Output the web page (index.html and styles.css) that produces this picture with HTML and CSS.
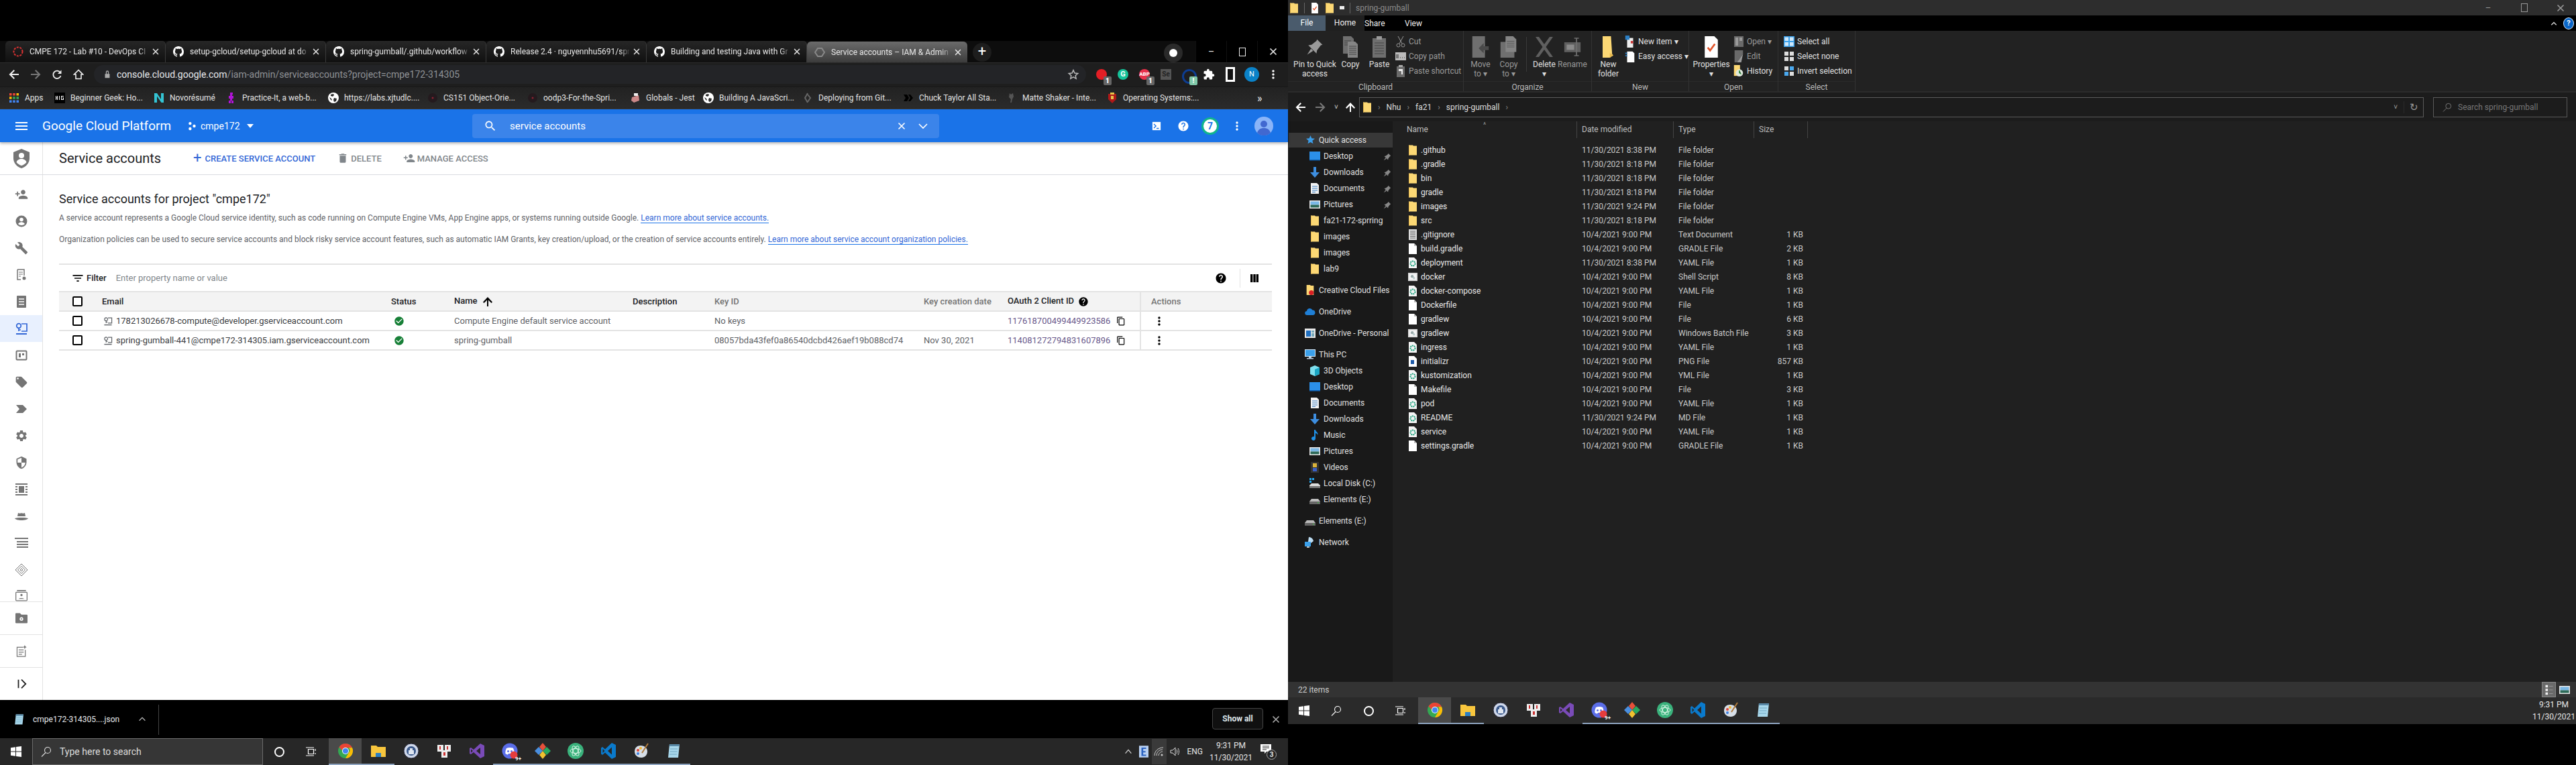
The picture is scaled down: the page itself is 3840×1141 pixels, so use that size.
FILE: index.html
```html
<!DOCTYPE html>
<html lang="en">
<head>
    <meta charset="UTF-8">
    <title>Service accounts</title>
    <link rel="stylesheet" href="styles.css">
</head>
<body>
<svg class="sprite" xmlns="http://www.w3.org/2000/svg">
    <symbol id="i-github" viewBox="0 0 16 16"><path fill="#fff" d="M8 0C3.58 0 0 3.58 0 8c0 3.54 2.29 6.53 5.47 7.59.4.07.55-.17.55-.38 0-.19-.01-.82-.01-1.49-2.01.37-2.53-.49-2.69-.94-.09-.23-.48-.94-.82-1.13-.28-.15-.68-.52-.01-.53.63-.01 1.08.58 1.23.82.72 1.21 1.87.87 2.33.66.07-.52.28-.87.51-1.07-1.78-.2-3.64-.89-3.64-3.95 0-.87.31-1.59.82-2.15-.08-.2-.36-1.02.08-2.12 0 0 .67-.21 2.2.82.64-.18 1.32-.27 2-.27.68 0 1.36.09 2 .27 1.53-1.04 2.2-.82 2.2-.82.44 1.1.16 1.92.08 2.12.51.56.82 1.27.82 2.15 0 3.07-1.87 3.75-3.65 3.95.29.25.54.73.54 1.48 0 1.07-.01 1.93-.01 2.2 0 .21.15.46.55.38A8.013 8.013 0 0016 8c0-4.42-3.58-8-8-8z"/></symbol>
    <symbol id="i-x" viewBox="0 0 16 16"><path fill="none" stroke="currentColor" stroke-width="1.6" d="M3.500 3.500l9 9m0-9l-9 9"/></symbol>
    <symbol id="i-search" viewBox="0 0 24 24"><path fill="currentColor" d="M15.5 14h-.79l-.28-.27C15.41 12.59 16 11.11 16 9.5 16 5.91 13.09 3 9.5 3S3 5.91 3 9.5 5.91 16 9.5 16c1.61 0 3.09-.59 4.23-1.57l.27.28v.79l5 4.99L20.49 19l-4.99-5zm-6 0C7.01 14 5 11.99 5 9.5S7.01 5 9.5 5 14 7.01 14 9.5 11.99 14 9.5 14z"/></symbol>
    <symbol id="i-help" viewBox="0 0 24 24"><path fill="currentColor" d="M12 2C6.48 2 2 6.48 2 12s4.48 10 10 10 10-4.48 10-10S17.52 2 12 2zm1 17h-2v-2h2v2zm2.07-7.75l-.9.92C13.45 12.9 13 13.5 13 15h-2v-.5c0-1.1.45-2.1 1.17-2.83l1.24-1.26c.37-.36.59-.86.59-1.41 0-1.1-.9-2-2-2s-2 .9-2 2H8c0-2.21 1.79-4 4-4s4 1.79 4 4c0 .88-.36 1.68-.93 2.25z"/></symbol>
    <symbol id="i-vert" viewBox="0 0 24 24"><path fill="currentColor" d="M12 8c1.1 0 2-.9 2-2s-.9-2-2-2-2 .9-2 2 .9 2 2 2zm0 2c-1.1 0-2 .9-2 2s.9 2 2 2 2-.9 2-2-.9-2-2-2zm0 6c-1.1 0-2 .9-2 2s.9 2 2 2 2-.9 2-2-.9-2-2-2z"/></symbol>
    <symbol id="i-check" viewBox="0 0 24 24"><path fill="#188038" d="M12 2C6.48 2 2 6.48 2 12s4.48 10 10 10 10-4.48 10-10S17.52 2 12 2zm-2 15l-5-5 1.41-1.41L10 14.17l7.59-7.59L19 8l-9 9z"/></symbol>
    <symbol id="i-copy" viewBox="0 0 24 24"><path fill="currentColor" d="M16 1H4c-1.1 0-2 .9-2 2v14h2V3h12V1zm3 4H8c-1.1 0-2 .9-2 2v14c0 1.1.9 2 2 2h11c1.1 0 2-.9 2-2V7c0-1.1-.9-2-2-2zm0 16H8V7h11v14z"/></symbol>
    <symbol id="i-trash" viewBox="0 0 24 24"><path fill="currentColor" d="M6 19c0 1.1.9 2 2 2h8c1.1 0 2-.9 2-2V7H6v12zM19 4h-3.5l-1-1h-5l-1 1H5v2h14V4z"/></symbol>
    <symbol id="i-personadd" viewBox="0 0 24 24"><path fill="currentColor" d="M15 12c2.21 0 4-1.79 4-4s-1.79-4-4-4-4 1.79-4 4 1.79 4 4 4zm-9-2V7H4v3H1v2h3v3h2v-3h3v-2H6zm9 4c-2.67 0-8 1.34-8 4v2h16v-2c0-2.66-5.33-4-8-4z"/></symbol>
    <symbol id="i-wrench" viewBox="0 0 24 24"><path fill="currentColor" d="M22.7 19l-9.1-9.1c.9-2.3.4-5-1.5-6.9-2-2-5-2.4-7.4-1.3L9 6 6 9 1.6 4.7C.4 7.1.9 10.1 2.9 12.1c1.9 1.9 4.6 2.4 6.9 1.5l9.1 9.1c.4.4 1 .4 1.4 0l2.3-2.3c.5-.4.5-1.1.1-1.4z"/></symbol>
    <symbol id="i-gear" viewBox="0 0 24 24"><path fill="currentColor" d="M19.14 12.94c.04-.3.06-.61.06-.94 0-.32-.02-.64-.07-.94l2.03-1.58c.18-.14.23-.41.12-.61l-1.92-3.32c-.12-.22-.37-.29-.59-.22l-2.39.96c-.5-.38-1.03-.7-1.62-.94l-.36-2.54c-.04-.24-.24-.41-.48-.41h-3.84c-.24 0-.43.17-.47.41l-.36 2.54c-.59.24-1.13.57-1.62.94l-2.39-.96c-.22-.08-.47 0-.59.22L2.74 8.87c-.12.21-.08.47.12.61l2.03 1.58c-.05.3-.09.63-.09.94s.02.64.07.94l-2.03 1.58c-.18.14-.23.41-.12.61l1.92 3.32c.12.22.37.29.59.22l2.39-.96c.5.38 1.03.7 1.62.94l.36 2.54c.05.24.24.41.48.41h3.84c.24 0 .44-.17.47-.41l.36-2.54c.59-.24 1.13-.56 1.62-.94l2.39.96c.22.08.47 0 .59-.22l1.92-3.32c.12-.22.07-.47-.12-.61l-2.01-1.58zM12 15.6c-1.98 0-3.6-1.62-3.6-3.6s1.62-3.6 3.6-3.6 3.6 1.62 3.6 3.6-1.62 3.6-3.6 3.6z"/></symbol>
    <symbol id="i-tag" viewBox="0 0 24 24"><path fill="currentColor" d="M21.41 11.58l-9-9C12.05 2.22 11.55 2 11 2H4c-1.1 0-2 .9-2 2v7c0 .55.22 1.05.59 1.42l9 9c.36.36.86.58 1.41.58.55 0 1.05-.22 1.41-.59l7-7c.37-.36.59-.86.59-1.41 0-.55-.23-1.06-.59-1.42zM5.5 7C4.67 7 4 6.33 4 5.5S4.67 4 5.5 4 7 4.67 7 5.5 6.33 7 5.5 7z"/></symbol>
    <symbol id="i-shield" viewBox="0 0 24 24"><path fill="currentColor" d="M12 1L3 5v6c0 5.55 3.84 10.74 9 12 5.16-1.26 9-6.45 9-12V5l-9-4zm0 11h7c-.53 4.12-3.28 7.79-7 8.94V12H5V6.3l7-3.11V12z"/></symbol>
    <symbol id="i-shieldperson" viewBox="0 0 24 29"><path fill="currentColor" d="M12 0L0 5v9c0 7 5 12.800 12 15 7-2.200 12-8 12-15V5z"/><circle cx="12" cy="10" r="4" fill="#fff"/><path fill="#fff" d="M4.500 20c1-3.500 4-5 7.500-5s6.500 1.500 7.500 5c-2 2.500-4.500 4-7.500 5-3-1-5.500-2.500-7.500-5z"/></symbol>
    <symbol id="i-acct" viewBox="0 0 20 20"><circle cx="10" cy="10" r="8.500" fill="currentColor"/><circle cx="10" cy="7.500" r="2.800" fill="#fff"/><path fill="#fff" d="M5 14c1-2 3-2.800 5-2.800s4 .8 5 2.800c-1.300 1.300-3 2-5 2s-3.700-.7-5-2z"/></symbol>
    <symbol id="i-docgear" viewBox="0 0 20 20"><path fill="none" stroke="currentColor" stroke-width="1.500" d="M4 2h10v9M9 17H4V2"/><path stroke="currentColor" d="M6 6h6M6 9h6M6 12h3"/><circle cx="14" cy="15" r="2.500" fill="currentColor"/></symbol>
    <symbol id="i-doc" viewBox="0 0 20 20"><path fill="currentColor" d="M4 1h12a1 1 0 011 1v16a1 1 0 01-1 1H4a1 1 0 01-1-1V2a1 1 0 011-1z"/><path stroke="#fff" stroke-width="1.500" d="M6 6h8M6 10h8M6 14h8"/></symbol>
    <symbol id="i-key" viewBox="0 0 20 20"><path fill="none" stroke="currentColor" stroke-width="1.700" d="M10 3h8v11h-8"/><circle cx="6" cy="6" r="3.300" fill="none" stroke="currentColor" stroke-width="1.700"/><path stroke="currentColor" stroke-width="1.700" d="M6 9v5M6 12h3"/><path stroke="currentColor" stroke-width="2" d="M2 18h16"/></symbol>
    <symbol id="i-frame" viewBox="0 0 20 20"><rect x="2.500" y="3.500" width="15" height="13" rx="1" fill="none" stroke="currentColor" stroke-width="2"/><path fill="currentColor" d="M6 7h3v6H6zM11 7h3v3h-3z"/></symbol>
    <symbol id="i-chev" viewBox="0 0 20 20"><path fill="currentColor" d="M2 4h10l6 6-6 6H2l5-6z"/></symbol>
    <symbol id="i-film" viewBox="0 0 20 20"><path fill="currentColor" d="M1 1h18v2H1zM1 17h18v2H1zM1 5h3v2H1zM16 5h3v2h-3zM1 9h3v2H1zM16 9h3v2h-3zM1 13h3v2H1zM16 13h3v2h-3zM6 5h8v10H6z"/></symbol>
    <symbol id="i-hat" viewBox="0 0 20 20"><path fill="currentColor" d="M4 10l1-5c1.500.8 3 .8 5 .3 2 .5 3.500.5 5-.3l1 5zM0 13c3-1.500 17-1.500 20 0-1 2-5 3-10 3S1 15 0 13z"/></symbol>
    <symbol id="i-rows" viewBox="0 0 20 20"><path fill="currentColor" d="M0 2h20v2H0zM3 7h17v2H3zM3 11h17v2H3zM3 15h17v2H3z"/></symbol>
    <symbol id="i-diamond" viewBox="0 0 20 20"><path fill="none" stroke="currentColor" d="M10 1l9 9-9 9-9-9zM10 4.500l5.500 5.500-5.500 5.500L4.500 10zM10 8l2 2-2 2-2-2z"/></symbol>
    <symbol id="i-badge" viewBox="0 0 22 24"><path fill="currentColor" d="M3 0h16v2H3zM3 22h16v2H3z"/><rect x="1" y="4" width="20" height="15" rx="1" fill="none" stroke="currentColor" stroke-width="1.500"/><circle cx="11" cy="9" r="2" fill="currentColor"/><path fill="currentColor" d="M6 16c1-2 8-2 10 0z"/></symbol>
    <symbol id="i-foldergear" viewBox="0 0 24 20"><path fill="currentColor" d="M0 1.500A1.500 1.500 0 011.500 0H9l3 3h10.500A1.500 1.500 0 0124 4.500v14a1.500 1.500 0 01-1.500 1.500h-21A1.500 1.500 0 010 18.500z"/><circle cx="12" cy="11.500" r="3.500" fill="#fff"/><circle cx="12" cy="11.500" r="1.300" fill="currentColor"/></symbol>
    <symbol id="i-note" viewBox="0 0 20 22"><path fill="none" stroke="currentColor" stroke-width="1.500" d="M13 4H2v17h15V9"/><path stroke="currentColor" stroke-width="1.500" d="M5 9h9M5 13h9M5 17h6"/><path fill="currentColor" d="M16 0l1 2.500L19.500 4 17 5l-1 3-1-3-2.500-1L15 2.500z"/></symbol>
    <symbol id="i-collapse" viewBox="0 0 20 20"><path fill="none" stroke="currentColor" stroke-width="2" d="M5 3v14M10 3l7 7-7 7"/></symbol>
    <symbol id="i-filter" viewBox="0 0 24 24"><path fill="currentColor" d="M10 18h4v-2h-4v2zM3 6v2h18V6H3zm3 7h12v-2H6v2z"/></symbol>
    <symbol id="i-cols" viewBox="0 0 24 24"><path fill="currentColor" d="M4 4h4.500v16H4zM9.800 4h4.500v16H9.800zM15.500 4H20v16h-4.500z"/></symbol>
    <symbol id="i-folder" viewBox="0 0 14 16"><path fill="#fcd874" d="M1 .5h6l1 1h5v14H1z"/><path fill="#e8b94e" d="M1 .5h1v15H1z"/></symbol>
    <symbol id="i-file" viewBox="0 0 14 16"><path fill="#fff" d="M1 0h8l4 4v12H1z"/><path fill="#bbb" d="M9 0l4 4H9z"/></symbol>
    <symbol id="i-text" viewBox="0 0 14 16"><path fill="#ddd" d="M1 0h12v16H1z"/><path stroke="#666" d="M3 3h8M3 5.500h8M3 8h8M3 10.500h8M3 13h8"/></symbol>
    <symbol id="i-yaml" viewBox="0 0 14 16"><path fill="#f4f4f4" d="M1 0h8l4 4v12H1z"/><circle cx="7" cy="9" r="3.500" fill="none" stroke="#19a07a" stroke-width="2" stroke-dasharray="2 1"/></symbol>
    <symbol id="i-shell" viewBox="0 0 16 16"><path fill="#ddd" d="M0 1h16v14H0z"/><path fill="#f6f6f6" d="M2 3h12v10H2z"/><circle cx="7" cy="7" r="2.500" fill="#9aa"/><circle cx="10" cy="10" r="2" fill="#bcc"/></symbol>
    <symbol id="i-png" viewBox="0 0 14 16"><path fill="#fff" d="M1 0h8l4 4v12H1z"/><path fill="#1e5aa8" d="M4 6h5v6H4z"/></symbol>
    <symbol id="i-star" viewBox="0 0 16 16"><path fill="#3b9de8" d="M8.500 1l1.800 4.300 4.700.4-3.600 3 1.100 4.600-4-2.400-4 2.400 1.100-4.600-3.600-3 4.700-.4z"/></symbol>
    <symbol id="i-desktop" viewBox="0 0 16 16"><path fill="#2b8fe8" d="M0 1h16v13H0z"/><path fill="#0d5fb0" d="M0 13h16v1.500H0z"/></symbol>
    <symbol id="i-down" viewBox="0 0 16 16"><path fill="#3d8ee0" d="M6 0h4v8h5l-7 8-7-8h5z"/></symbol>
    <symbol id="i-docs" viewBox="0 0 16 16"><path fill="#f2f2f2" d="M2 0h9l3 3v13H2z"/><path stroke="#3a7fc2" d="M4 5h8M4 8h8M4 11h8M4 13.500h5"/></symbol>
    <symbol id="i-pics" viewBox="0 0 16 16"><path fill="#e8e8e8" d="M0 2h16v12H0z"/><path fill="#7ab8e6" d="M1.500 3.500h13v5h-13z"/><path fill="#2d6a58" d="M1.500 8.500h13v4h-13z"/></symbol>
    <symbol id="i-cc" viewBox="0 0 14 18"><path fill="#fcd874" d="M1 0h6l1 1h5v16H1z"/><circle cx="9" cy="13" r="4" fill="#da1f26"/></symbol>
    <symbol id="i-cloud" viewBox="0 0 16 16"><path fill="#1f7fd6" d="M3.500 13a3 3 0 01-.5-6 4.500 4.500 0 018.500-1.500A3.800 3.800 0 0112.500 13z"/></symbol>
    <symbol id="i-onepers" viewBox="0 0 16 16"><path fill="#e8e8e8" d="M0 1h16v14H0z"/><path fill="#1f6fc0" d="M2 4h7v9H2z"/><path fill="#7ab" d="M10 4h4v3h-4zM10 8h4v5h-4z"/></symbol>
    <symbol id="i-pc" viewBox="0 0 16 16"><path fill="#d8e6f2" d="M0 0h16v11H0z"/><path fill="#3ba0ea" d="M1 1h14v9H1z"/><path fill="#bcd" d="M6 11h4v2H6zM3 13h10v1.500H3z"/></symbol>
    <symbol id="i-cube" viewBox="0 0 16 16"><path fill="#7fe0ee" d="M8 0l7 3v10l-7 3-7-3V3z"/><path fill="#1aa6c4" d="M8 6v10l7-3V3z"/></symbol>
    <symbol id="i-music" viewBox="0 0 16 16"><path fill="#1e90e6" d="M7 0h2c0 3 5 4 3 8 0-2-2-3-3-3v8a3 3 0 11-2-2.800z"/></symbol>
    <symbol id="i-video" viewBox="0 0 16 16"><path fill="#333" d="M2 0h12v16H2z"/><path fill="#d9b23a" d="M5 2h6v6H5z"/><path fill="#3a5fc8" d="M5 9h6v5H5z"/></symbol>
    <symbol id="i-disk" viewBox="0 0 16 16"><path fill="#bbb" d="M3 7h10l3 4v4H0v-4z"/><path fill="#666" d="M0 11h16v4H0z"/><path fill="#4caf50" d="M12 12h2v1.500h-2z"/></symbol>
    <symbol id="i-sysdisk" viewBox="0 0 16 16"><path fill="#26a6f0" d="M0 0h3v3H0zM4 0h3v3H4zM0 4h3v3H0z"/><path fill="#ddd" d="M3 8h10l3 3v4H0v-4z"/><path fill="#777" d="M0 12h16v3H0z"/></symbol>
    <symbol id="i-net" viewBox="0 0 16 16"><path fill="#bcdcf2" d="M6 0a7 7 0 017 6l-5 4-3-3z"/><path fill="#3ba0ea" d="M0 7h9v7H0z"/><path fill="#bbb" d="M3 14h4v2H3z"/></symbol>
    <symbol id="i-pin" viewBox="0 0 16 16"><path fill="currentColor" d="M10 1l5 5-1.500.5L10 11l-.5 3L2 6.500 5 6l4.500-3.500zM4.500 9.500L1 15l5.500-3.500z"/></symbol>
    <symbol id="i-win" viewBox="0 0 16 16"><path fill="#fff" d="M0 2.300l7-1V7.500H0zM8 1.100L16 0v7.500H8zM0 8.500h7v6.200l-7-1zM8 8.500h8V16l-8-1.100z"/></symbol>
    <symbol id="i-mag" viewBox="0 0 16 16"><circle cx="10" cy="6" r="4.500" fill="none" stroke="currentColor" stroke-width="1.100"/><path stroke="currentColor" stroke-width="1.100" d="M7 9.500L1 15.500"/></symbol>
    <symbol id="i-taskview" viewBox="0 0 16 16"><path fill="none" stroke="#fff" stroke-width="1.200" d="M3.500 4.500h8v7h-8zM0 2h12M0 14h12M14 4v3M14 10v2"/></symbol>
    <symbol id="i-chrome" viewBox="0 0 24 24"><circle cx="12" cy="12" r="11" fill="#34a853"/><path fill="#ea4335" d="M2.500 6.500A11 11 0 0122 7.200H12a5 5 0 00-5 4z"/><path fill="#fbbc05" d="M22 7.200A11 11 0 0112 23l5-8.500a5 5 0 000-7.300z"/><circle cx="12" cy="12" r="5" fill="#fff"/><circle cx="12" cy="12" r="4" fill="#4285f4"/></symbol>
    <symbol id="i-tbfolder" viewBox="0 0 24 24"><path fill="#f8c63d" d="M1 4h8l2 2h12v15H1z"/><path fill="#2b7fc4" d="M8 15h8v6H8z"/></symbol>
    <symbol id="i-keepass" viewBox="0 0 24 24"><circle cx="12" cy="12" r="11" fill="#cfd8ea" stroke="#223" stroke-width="1"/><circle cx="12" cy="12" r="7" fill="#3c5a8c"/><path fill="#dfe6f0" d="M8 11h8v6H8zM10 8h4v3h-4z"/></symbol>
    <symbol id="i-mahjong" viewBox="0 0 24 24"><path fill="#eee" d="M2 3h9v10H2zM13 3h9v10h-9zM8 11h9v11H8z"/><path fill="#c33" d="M5 5h2v5H5zM16 5h2v5h-2zM11 14h3v5h-3z"/></symbol>
    <symbol id="i-vs" viewBox="0 0 24 24"><path fill="#7a4bb8" d="M17 1l6 3v16l-6 3-10-9-4 3-2-1V8l2-1 4 3zM17 7l-6 5 6 5zM3 9.500v5L6 12z"/></symbol>
    <symbol id="i-discord" viewBox="0 0 24 24"><circle cx="12" cy="12" r="11.500" fill="#5b6ee8"/><path fill="#fff" d="M7 8c3-1.500 7-1.500 10 0 1.500 3 2 6 1.500 8-1.500 1-3 1.500-3.500 1.500l-1-1.500h-4l-1 1.500c-.5 0-2-.5-3.500-1.500C5 14 5.500 11 7 8z"/><circle cx="9.500" cy="12.500" r="1.500" fill="#5b6ee8"/><circle cx="14.500" cy="12.500" r="1.500" fill="#5b6ee8"/><circle cx="18" cy="18" r="5.500" fill="#e63c3c"/></symbol>
    <symbol id="i-git" viewBox="0 0 24 24"><path fill="#e8503a" d="M12 0l5 6-5 6-5-6z"/><path fill="#4a8fe0" d="M6 6l6 6-6 6-6-6z"/><path fill="#2aa860" d="M18 6l6 6-6 6-6-6z"/><path fill="#f2c230" d="M12 12l5 6-5 6-5-6z"/></symbol>
    <symbol id="i-atom" viewBox="0 0 24 24"><circle cx="12" cy="12" r="12" fill="#3ab27c"/><g fill="none" stroke="#d8f5e6"><ellipse cx="12" cy="12" rx="8" ry="3.500"/><ellipse cx="12" cy="12" rx="8" ry="3.500" transform="rotate(60 12 12)"/><ellipse cx="12" cy="12" rx="8" ry="3.500" transform="rotate(120 12 12)"/></g></symbol>
    <symbol id="i-vscode" viewBox="0 0 24 24"><path fill="#0a7acc" d="M17 0l6 3v18l-6 3-10-9.500L3 18l-2-1.500V7.500L3 6l4 3.500zM17 6.500l-6 5.500 6 5.500zM3.500 9v6L6.500 12z"/></symbol>
    <symbol id="i-paint" viewBox="0 0 24 24"><path fill="#d7dfe8" d="M11 4c6 0 10 4 10 9s-4 9-9 9-10-3-10-9 4-9 9-9z"/><circle cx="7" cy="11" r="2" fill="#e0453a"/><circle cx="11" cy="8" r="2" fill="#f2b632"/><circle cx="7" cy="16" r="2" fill="#3f80e0"/><path stroke="#b07a3c" stroke-width="2" d="M13 15L22 1"/></symbol>
    <symbol id="i-notepad" viewBox="0 0 24 24"><path fill="#a9d8ec" d="M5 2h15l-2 20H3z"/><path fill="#5a8aa8" d="M5 2h15l-.3 3H4.700z"/><path stroke="#6fa5c0" d="M6 9h11M5.500 13h11M5 17h11"/></symbol>
    <symbol id="i-tray-e" viewBox="0 0 16 20"><path fill="#b8d0f2" d="M0 0h16v20H0z"/><path fill="#2a62c0" d="M4 3h8v2.500H7V9h4v2.500H7V15h5v2.500H4z"/></symbol>
    <symbol id="i-wifi" viewBox="0 0 16 16"><path fill="none" stroke="#ccc" d="M1 14C1 7 7 2 14 2M4 14c0-5 4-9 9-9M7 14c0-3 3-6 6-6"/><circle cx="12" cy="13" r="1.500" fill="#ccc"/></symbol>
    <symbol id="i-sound" viewBox="0 0 16 16"><path fill="none" stroke="#ddd" d="M1 6h3l4-4v12l-4-4H1zM10 5c1 2 1 4 0 6M12 3c2 3 2 7 0 10"/></symbol>
    <symbol id="i-notif" viewBox="0 0 16 16"><path fill="#fff" d="M0 1h16v11H9l-3 3v-3H0z"/><path stroke="#333" d="M3 4h10M3 6.500h10M3 9h6"/></symbol>
    <symbol id="i-qa-arrow" viewBox="0 0 16 16"><path fill="currentColor" d="M8 1L1 8.500l1.500 1.500L7 5.500V15h2V5.500l4.500 4.500L15 8.500z"/></symbol>
    <symbol id="i-back" viewBox="0 0 16 16"><path fill="currentColor" d="M7.500 1L9 2.500 4.500 7H15v2H4.500L9 13.500 7.500 15 .5 8z"/></symbol>
    <symbol id="i-fwd" viewBox="0 0 16 16"><path fill="currentColor" d="M8.500 1L7 2.500 11.500 7H1v2h10.500L7 13.500 8.500 15l7-7z"/></symbol>
    <symbol id="i-reload" viewBox="0 0 16 16"><path fill="none" stroke="currentColor" stroke-width="1.800" d="M13 5.500A5.700 5.700 0 1013.500 10"/><path fill="currentColor" d="M14.500 1.500V7H9z"/></symbol>
    <symbol id="i-home" viewBox="0 0 16 16"><path fill="none" stroke="currentColor" stroke-width="1.600" d="M8 1.500L1.500 8H4v6.500h8V8h2.500z"/></symbol>
    <symbol id="i-lock" viewBox="0 0 12 16"><path fill="currentColor" d="M2 7h8v7H2zM3.500 7V4a2.500 2.500 0 015 0v3H7V4a1 1 0 00-2 0v3z"/></symbol>
    <symbol id="i-bstar" viewBox="0 0 24 24"><path fill="none" stroke="currentColor" stroke-width="2" d="M12 3.500l2.600 5.800 6.300.7-4.700 4.200 1.300 6.300-5.500-3.200-5.500 3.200 1.300-6.300L3.100 10l6.300-.7z"/></symbol>
    <symbol id="i-puzzle" viewBox="0 0 24 24"><path fill="#fff" d="M20.500 11H19V7a2 2 0 00-2-2h-4V3.500a2.500 2.500 0 00-5 0V5H4a2 2 0 00-2 2v3.800h1.500a2.700 2.700 0 010 5.400H2V20a2 2 0 002 2h3.800v-1.500a2.700 2.700 0 015.400 0V22H17a2 2 0 002-2v-4h1.500a2.500 2.500 0 000-5z"/></symbol>
    <symbol id="i-apps" viewBox="0 0 16 16"><g fill="#ea4335"><path d="M1 1h3.500v3.500H1zM6.250 1h3.500v3.500h-3.500z"/></g><path fill="#fbbc05" d="M11.500 1H15v3.500h-3.500zM1 6.250h3.500v3.500H1z"/><path fill="#34a853" d="M6.250 6.250h3.500v3.500h-3.500zM11.500 6.250H15v3.500h-3.500z"/><path fill="#4285f4" d="M1 11.500h3.500V15H1zM6.250 11.500h3.500V15h-3.500zM11.500 11.500H15V15h-3.500z"/></symbol>
    <symbol id="i-globe" viewBox="0 0 16 16"><circle cx="8" cy="8" r="8" fill="#fff"/><path fill="#2a2a2a" d="M4 3l4-1 1 2-2 2-3-1zM9 8l4 1-1 4-3 1-1-3zM2 7l3 2 1 3-2-1z"/></symbol>
    <symbol id="i-hash" viewBox="0 0 16 16"><path fill="#000" d="M0 0h16v16H0z"/><path fill="#fff" d="M2 5h1v6H2zM4 5h1v6H4zM2 7.500h3v1H2zM7 5h1v6H7zM10 5h4v1h-3v4h2V8.500h-1v-1h2V11h-4z"/></symbol>
    <symbol id="i-novo" viewBox="0 0 16 16"><path fill="#34c4d4" d="M1 1h4l6 9V1h4v14h-3.500L5 5.500V15H1z"/></symbol>
    <symbol id="i-buggy" viewBox="0 0 16 16"><path fill="#b014d8" d="M6 0h4v3H9v2h2v4H9v3h2v4H8v-4H7v4H4v-4h2V9H4V5h2z"/></symbol>
    <symbol id="i-moodle" viewBox="0 0 16 16"><circle cx="8" cy="8" r="7" fill="#241a1e"/><circle cx="8" cy="8" r="1.500" fill="#8a2030"/></symbol>
    <symbol id="i-globals" viewBox="0 0 16 16"><path fill="#c88" d="M3 7l10-3 1 8-8 3-4-3z"/><path fill="#eee" d="M6 1h6v4H6z"/></symbol>
    <symbol id="i-rs" viewBox="0 0 16 16"><path fill="none" stroke="#666" stroke-width="2" d="M8 1L4 8l4 7M8 3l4 5-4 6"/></symbol>
    <symbol id="i-conv" viewBox="0 0 16 16"><path fill="#000" d="M1 3h5l3 5-3 5H1l3-5zM8 3h3l4 5-4 5H8l3-5z"/></symbol>
    <symbol id="i-matte" viewBox="0 0 16 16"><path fill="#555" d="M5 1l2 2 3-2 1 5-2 4-1 5H6l1-5-3-3z"/></symbol>
    <symbol id="i-wisc" viewBox="0 0 16 16"><path fill="#b01818" d="M2 2h12v8l-6 6-6-6z"/><path fill="#e8c44a" d="M5 0h6v3H5zM6 5h4v5H6z"/></symbol>
    <symbol id="i-gcphex" viewBox="0 0 16 16"><path fill="none" stroke="#8a8a8a" stroke-width="2" d="M5 2h6l4 6-4 6H5L1 8z"/></symbol>
    <symbol id="i-gcpnodes" viewBox="0 0 16 16"><circle cx="5" cy="3.500" r="2.500" fill="#fff"/><circle cx="5" cy="12.500" r="2.500" fill="#fff"/><circle cx="12" cy="8" r="2.500" fill="#fff"/></symbol>
    <symbol id="i-cloudshell" viewBox="0 0 16 16"><path fill="#fff" d="M1 1h14v14H1z"/><path fill="none" stroke="#1a73e8" stroke-width="1.600" d="M3.500 4.500L7 8l-3.500 3.500M8 12h4"/></symbol>
    <symbol id="i-cut" viewBox="0 0 16 18"><path fill="none" stroke="#9a9a9a" d="M4 1l6 11M12 1L6 12"/><circle cx="4.500" cy="14.500" r="2.500" fill="none" stroke="#9a9a9a"/><circle cx="11.500" cy="14.500" r="2.500" fill="none" stroke="#9a9a9a"/></symbol>
    <symbol id="i-copypath" viewBox="0 0 16 16"><path fill="#bbb" d="M0 2h16v12H0z"/><path stroke="#333" d="M2 5v6M4 5v6M7 10h1M10 10h1M13 10h1"/></symbol>
    <symbol id="i-pasteshort" viewBox="0 0 16 18"><path fill="#6a6a6a" d="M2 2h12v16H2z"/><path fill="#aaa" d="M5 0h6v3H5z"/><path fill="#eee" d="M5 6h6v8H9V9H5z"/></symbol>
    <symbol id="i-bigcopy" viewBox="0 0 24 32"><path fill="#6f6f6f" d="M1 0h12l4 4v22H1z"/><path stroke="#444" d="M3 7h10M3 10h10M3 13h10"/><path fill="#858585" d="M8 8h11l4 4v20H8z"/><path stroke="#444" d="M10 15h11M10 18h11M10 21h11M10 24h11M10 27h11"/></symbol>
    <symbol id="i-bigpaste" viewBox="0 0 24 32"><path fill="#6f6f6f" d="M2 3h20v29H2z"/><path fill="#9a9a9a" d="M8 0h8v5H8z"/><path stroke="#444" d="M5 10h14M5 14h14M5 18h14M5 22h14M5 26h14"/></symbol>
    <symbol id="i-movefolder" viewBox="0 0 26 34"><path fill="#6f6f6f" d="M0 0h20v34H0z"/><path fill="#4a4a4a" d="M18 11l-8 8 8 8v-5h8v-6h-8z"/></symbol>
    <symbol id="i-copyfolder" viewBox="0 0 26 34"><path fill="#6f6f6f" d="M0 9h22v25H0z"/><path fill="#858585" d="M8 0h12l5 5v20H8z"/><path stroke="#555" d="M10 8h12M10 11h12M10 14h12M10 17h12"/></symbol>
    <symbol id="i-bigx" viewBox="0 0 26 30"><path fill="#5f5f5f" d="M0 0h5l8 11L21 0h5l-10.500 15L26 30h-5l-8-11-8 11H0l10.500-15z"/></symbol>
    <symbol id="i-rename" viewBox="0 0 30 34"><path fill="#5f5f5f" d="M1 9h28v17H1z"/><path fill="#8a8a8a" d="M5 13h13v9H5z"/><path stroke="#6f6f6f" stroke-width="2" d="M22 2v30M18 2h8M18 32h8"/></symbol>
    <symbol id="i-newfolder" viewBox="0 0 20 36"><path fill="#fcd874" d="M1 0h14l2 30 2 2-6 4H1z"/><path fill="#e8b94e" d="M13 28l6 4-6 4z"/></symbol>
    <symbol id="i-newitem" viewBox="0 0 16 20"><path fill="#eee" d="M3 4h10v16H3z"/><path fill="#2b7fc4" d="M0 0h7v7H0z"/><path fill="#c33" d="M9 9h4v4H9z"/></symbol>
    <symbol id="i-easy" viewBox="0 0 16 20"><path fill="#fff" d="M3 2h9l3 3v15H3z"/><path fill="#2b7fc4" d="M0 4h3v2H0zM0 8h3v2H0z"/></symbol>
    <symbol id="i-props" viewBox="0 0 24 36"><path fill="#fff" d="M1 0h16l6 6v30H1z"/><path fill="none" stroke="#e2552b" stroke-width="3" d="M6 19l4 5 8-11"/></symbol>
    <symbol id="i-open" viewBox="0 0 16 18"><path fill="#6a6a6a" d="M1 1h14v16H1z"/><path fill="#9a9a9a" d="M3 3h4v12H3zM9 3h4v5H9z"/></symbol>
    <symbol id="i-edit" viewBox="0 0 16 20"><path fill="#6a6a6a" d="M1 0h14v6L5 20H1z"/><path fill="#9a9a9a" d="M15 6l-3 14H5z"/></symbol>
    <symbol id="i-history" viewBox="0 0 16 20"><path fill="#fcd874" d="M0 0h10v18H0z"/><circle cx="9" cy="13" r="6" fill="#dfe8dc"/><path stroke="#2a9a3a" stroke-width="1.500" d="M9 9v4l3 2"/></symbol>
    <symbol id="i-selall" viewBox="0 0 16 16"><path fill="#3ba0ea" d="M0 0h16v16H0z"/><path fill="#cfe8fa" d="M1.500 1.500h5.500v5.500H1.500zM9 1.500h5.500v5.500H9zM1.500 9h5.500v5.500H1.500zM9 9h5.500v5.500H9z"/></symbol>
    <symbol id="i-selnone" viewBox="0 0 16 16"><path fill="#ddd" d="M1 1h6v6H1zM9 1h6v6H9zM1 9h6v6H1zM9 9h6v6H9z"/></symbol>
    <symbol id="i-selinv" viewBox="0 0 16 16"><path fill="#ddd" d="M1 1h6v6H1zM9 9h6v6H9z"/><path fill="#4aa8ee" d="M9 1h6v6H9zM1 9h6v6H1z"/></symbol>
    <symbol id="i-viewdetail" viewBox="0 0 16 24"><path fill="#eee" d="M2 4h4v4H2zM2 10h4v4H2zM2 16h4v4H2z"/><path stroke="#999" d="M8 6h6M8 12h6M8 18h6"/></symbol>
</svg>

<div class="desktop">
    <div class="screen">
        <div class="blackbar"></div>

        <div class="chrome">
            <div class="tabstrip">
                <div class="tab">
                    <svg class="tab-favicon"><circle cx="8" cy="8" r="6.500" fill="none" stroke="#d33" stroke-width="2" stroke-dasharray="3 1.600"/></svg>
                    <span class="tab-title">CMPE 172 - Lab #10 - DevOps CI</span>
                    <svg class="tab-close"><use href="#i-x"/></svg>
                </div>
                <div class="tab">
                    <svg class="tab-favicon"><use href="#i-github"/></svg>
                    <span class="tab-title">setup-gcloud/setup-gcloud at do</span>
                    <svg class="tab-close"><use href="#i-x"/></svg>
                </div>
                <div class="tab">
                    <svg class="tab-favicon"><use href="#i-github"/></svg>
                    <span class="tab-title">spring-gumball/.github/workflow</span>
                    <svg class="tab-close"><use href="#i-x"/></svg>
                </div>
                <div class="tab">
                    <svg class="tab-favicon"><use href="#i-github"/></svg>
                    <span class="tab-title">Release 2.4 · nguyennhu5691/spr</span>
                    <svg class="tab-close"><use href="#i-x"/></svg>
                </div>
                <div class="tab">
                    <svg class="tab-favicon"><use href="#i-github"/></svg>
                    <span class="tab-title">Building and testing Java with Gr</span>
                    <svg class="tab-close"><use href="#i-x"/></svg>
                </div>
                <div class="tab tab-active">
                    <svg class="tab-favicon"><use href="#i-gcphex"/></svg>
                    <span class="tab-title">Service accounts – IAM &amp; Admin</span>
                    <svg class="tab-close"><use href="#i-x"/></svg>
                </div>
                <div class="tab-new">+</div>
                <div class="tab-spacer"></div>
                <div class="profile-dot"><span class="profile-arrow"></span></div>
                <div class="winbtns">
                    <span class="winbtn">–</span>
                    <span class="winbtn"><span class="restore"></span></span>
                    <span class="winbtn"><svg class="s16"><use href="#i-x"/></svg></span>
                </div>
            </div>

            <div class="urlbar">
                <svg class="nav-icon"><use href="#i-back"/></svg>
                <svg class="nav-icon nav-off"><use href="#i-fwd"/></svg>
                <svg class="nav-icon"><use href="#i-reload"/></svg>
                <svg class="nav-icon"><use href="#i-home"/></svg>
                <div class="omnibox">
                    <svg class="lock"><use href="#i-lock"/></svg>
                    <span class="url-host">console.cloud.google.com</span><span class="url-rest">/iam-admin/serviceaccounts?project=cmpe172-314305</span>
                    <svg class="bstar"><use href="#i-bstar"/></svg>
                </div>
                <div class="exts">
                    <span class="ext ext-red"><b class="ext-num">1</b></span>
                    <span class="ext ext-green">G</span>
                    <span class="ext ext-abp">ABP<b class="ext-num">1</b></span>
                    <span class="ext ext-se">Se</span>
                    <span class="ext ext-o"><b class="ext-num ext-num-green">!</b></span>
                    <span class="ext"><svg class="s18"><use href="#i-puzzle"/></svg></span>
                    <span class="ext"><span class="ext-box"></span></span>
                    <span class="ext ext-avatar">N</span>
                    <span class="ext"><svg class="s20 white"><use href="#i-vert"/></svg></span>
                </div>
            </div>

            <div class="bookmarks">
                <div class="bm"><svg class="s16"><use href="#i-apps"/></svg><span>Apps</span></div>
                <div class="bm"><svg class="s16"><use href="#i-hash"/></svg><span>Beginner Geek: Ho...</span></div>
                <div class="bm"><svg class="s16"><use href="#i-novo"/></svg><span>Novorésumé</span></div>
                <div class="bm"><svg class="s16"><use href="#i-buggy"/></svg><span>Practice-It, a web-b...</span></div>
                <div class="bm"><svg class="s16"><use href="#i-globe"/></svg><span>https://labs.xjtudlc....</span></div>
                <div class="bm"><svg class="s16"><use href="#i-moodle"/></svg><span>CS151 Object-Orie...</span></div>
                <div class="bm"><svg class="s16"><use href="#i-moodle"/></svg><span>oodp3-For-the-Spri...</span></div>
                <div class="bm"><svg class="s16"><use href="#i-globals"/></svg><span>Globals - Jest</span></div>
                <div class="bm"><svg class="s16"><use href="#i-globe"/></svg><span>Building A JavaScri...</span></div>
                <div class="bm"><svg class="s16"><use href="#i-rs"/></svg><span>Deploying from Git...</span></div>
                <div class="bm"><svg class="s16"><use href="#i-conv"/></svg><span>Chuck Taylor All Sta...</span></div>
                <div class="bm"><svg class="s16"><use href="#i-matte"/></svg><span>Matte Shaker - Inte...</span></div>
                <div class="bm"><svg class="s16"><use href="#i-wisc"/></svg><span>Operating Systems:...</span></div>
                <div class="bm-more">»</div>
            </div>

            <header class="gcp-head">
                <div class="burger"><i></i><i></i><i></i></div>
                <div class="gcp-brand">Google Cloud Platform</div>
                <div class="gcp-project">
                    <svg class="s14"><use href="#i-gcpnodes"/></svg>
                    <span>cmpe172</span>
                    <span class="caret"></span>
                </div>
                <div class="gcp-search">
                    <svg class="s20"><use href="#i-search"/></svg>
                    <span class="gcp-search-text">service accounts</span>
                    <svg class="s16 search-x"><use href="#i-x"/></svg>
                    <svg class="search-chev" viewBox="0 0 16 16"><path fill="none" stroke="#fff" stroke-width="1.600" d="M2 5l6 6 6-6"/></svg>
                </div>
                <div class="gcp-right">
                    <span class="gcp-btn"><svg class="s14"><use href="#i-cloudshell"/></svg></span>
                    <span class="gcp-btn"><svg class="s18 white"><use href="#i-help"/></svg></span>
                    <span class="gcp-btn"><span class="notif-7">7</span></span>
                    <span class="gcp-btn"><svg class="s20 white"><use href="#i-vert"/></svg></span>
                    <span class="gcp-btn"><svg class="avatar" viewBox="0 0 28 28"><circle cx="14" cy="14" r="14" fill="#8ab4f8"/><circle cx="14" cy="11" r="5" fill="#4168d0"/><path fill="#4168d0" d="M4 24c2-6 6-7 10-7s8 1 10 7a14 14 0 01-20 0z"/></svg></span>
                </div>
            </header>

            <div class="iam-toolbar">
                <div class="iam-logo"><svg class="shield-big"><use href="#i-shieldperson"/></svg></div>
                <h1 class="iam-title">Service accounts</h1>
                <div class="action action-blue"><span class="plus">+</span>CREATE SERVICE ACCOUNT</div>
                <div class="action"><svg class="s18"><use href="#i-trash"/></svg>DELETE</div>
                <div class="action"><svg class="s18"><use href="#i-personadd"/></svg>MANAGE ACCESS</div>
            </div>

            <div class="iam-body">
                <nav class="sidenav">
                    <div class="sidenav-scroll">
                        <a class="side-item"><svg><use href="#i-personadd"/></svg></a>
                        <a class="side-item"><svg><use href="#i-acct"/></svg></a>
                        <a class="side-item"><svg><use href="#i-wrench"/></svg></a>
                        <a class="side-item"><svg><use href="#i-docgear"/></svg></a>
                        <a class="side-item"><svg><use href="#i-doc"/></svg></a>
                        <a class="side-item side-active"><svg><use href="#i-key"/></svg></a>
                        <a class="side-item"><svg><use href="#i-frame"/></svg></a>
                        <a class="side-item"><svg><use href="#i-tag"/></svg></a>
                        <a class="side-item"><svg><use href="#i-chev"/></svg></a>
                        <a class="side-item"><svg><use href="#i-gear"/></svg></a>
                        <a class="side-item"><svg><use href="#i-shield"/></svg></a>
                        <a class="side-item"><svg><use href="#i-film"/></svg></a>
                        <a class="side-item"><svg><use href="#i-hat"/></svg></a>
                        <a class="side-item"><svg><use href="#i-rows"/></svg></a>
                        <a class="side-item"><svg><use href="#i-diamond"/></svg></a>
                        <a class="side-item"><svg><use href="#i-badge"/></svg></a>
                    </div>
                    <a class="side-foot"><svg><use href="#i-foldergear"/></svg></a>
                    <a class="side-foot"><svg><use href="#i-note"/></svg></a>
                    <a class="side-foot side-dark"><svg><use href="#i-collapse"/></svg></a>
                </nav>

                <main class="iam-main">
                    <h2 class="proj-title">Service accounts for project "cmpe172"</h2>
                    <p class="proj-desc">A service account represents a Google Cloud service identity, such as code running on Compute Engine VMs, App Engine apps, or systems running outside Google. <a>Learn more about service accounts.</a></p>
                    <p class="proj-desc proj-desc-2">Organization policies can be used to secure service accounts and block risky service account features, such as automatic IAM Grants, key creation/upload, or the creation of service accounts entirely. <a>Learn more about service account organization policies.</a></p>

                    <div class="filterbar">
                        <svg class="s20 dark"><use href="#i-filter"/></svg>
                        <span class="filter-label">Filter</span>
                        <span class="filter-hint">Enter property name or value</span>
                        <span class="filter-help"><svg class="s18 dark"><use href="#i-help"/></svg></span>
                        <span class="filter-cols"><svg class="s18 dark"><use href="#i-cols"/></svg></span>
                    </div>

                    <table class="sa-table">
                        <colgroup>
                            <col class="c-check"><col class="c-email"><col class="c-status"><col class="c-name"><col class="c-desc"><col class="c-key"><col class="c-date"><col class="c-oauth"><col class="c-actions">
                        </colgroup>
                        <thead>
                            <tr>
                                <th><span class="cbox"></span></th>
                                <th class="th-dark">Email</th>
                                <th class="th-dark">Status</th>
                                <th class="th-dark">Name <svg class="s16 sort-arrow"><use href="#i-qa-arrow"/></svg></th>
                                <th class="th-dark">Description</th>
                                <th>Key ID</th>
                                <th>Key creation date</th>
                                <th class="th-dark">OAuth 2 Client ID <svg class="s16 th-help dark"><use href="#i-help"/></svg></th>
                                <th class="td-actions">Actions</th>
                            </tr>
                        </thead>
                        <tbody>
                            <tr>
                                <td><span class="cbox"></span></td>
                                <td class="td-email"><svg class="s14 key-ic"><use href="#i-key"/></svg>178213026678-compute@developer.gserviceaccount.com</td>
                                <td><svg class="s16 status-ic"><use href="#i-check"/></svg></td>
                                <td>Compute Engine default service account</td>
                                <td></td>
                                <td>No keys</td>
                                <td></td>
                                <td class="td-oauth">117618700499449923586<svg class="s14 copy-ic"><use href="#i-copy"/></svg></td>
                                <td class="td-actions"><svg class="s20 kebab"><use href="#i-vert"/></svg></td>
                            </tr>
                            <tr>
                                <td><span class="cbox"></span></td>
                                <td class="td-email"><svg class="s14 key-ic"><use href="#i-key"/></svg>spring-gumball-441@cmpe172-314305.iam.gserviceaccount.com</td>
                                <td><svg class="s16 status-ic"><use href="#i-check"/></svg></td>
                                <td>spring-gumball</td>
                                <td></td>
                                <td>08057bda43fef0a86540dcbd426aef19b088cd74</td>
                                <td>Nov 30, 2021</td>
                                <td class="td-oauth">114081272794831607896<svg class="s14 copy-ic"><use href="#i-copy"/></svg></td>
                                <td class="td-actions"><svg class="s20 kebab"><use href="#i-vert"/></svg></td>
                            </tr>
                        </tbody>
                    </table>
                </main>
            </div>
        </div>

        <div class="shelf">
            <svg class="shelf-file"><use href="#i-notepad"/></svg>
            <span class="shelf-name">cmpe172-314305....json</span>
            <svg class="shelf-caret" viewBox="0 0 16 16"><path fill="none" stroke="#bbb" stroke-width="1.400" d="M3 10l5-5 5 5"/></svg>
            <span class="shelf-sep"></span>
            <span class="shelf-space"></span>
            <span class="shelf-all">Show all</span>
            <svg class="s16 shelf-x"><use href="#i-x"/></svg>
        </div>

        <div class="taskbar">
            <div class="tb-start"><svg class="s16"><use href="#i-win"/></svg></div>
            <div class="tb-searchbox">
                <svg class="s16"><use href="#i-mag"/></svg>
                <span>Type here to search</span>
            </div>
            <div class="tb-cortana"><span class="ring"></span></div>
            <div class="tb-view"><svg class="s16"><use href="#i-taskview"/></svg></div>
            <div class="tb-app tb-active tb-open"><svg><use href="#i-chrome"/></svg></div>
            <div class="tb-app tb-open"><svg><use href="#i-tbfolder"/></svg></div>
            <div class="tb-app"><svg><use href="#i-keepass"/></svg></div>
            <div class="tb-app"><svg><use href="#i-mahjong"/></svg></div>
            <div class="tb-app"><svg><use href="#i-vs"/></svg></div>
            <div class="tb-app tb-open"><svg><use href="#i-discord"/></svg><span class="tb-badge">9+</span></div>
            <div class="tb-app tb-open"><svg><use href="#i-git"/></svg></div>
            <div class="tb-app tb-open"><svg><use href="#i-atom"/></svg></div>
            <div class="tb-app tb-open"><svg><use href="#i-vscode"/></svg></div>
            <div class="tb-app tb-open"><svg><use href="#i-paint"/></svg></div>
            <div class="tb-app tb-open"><svg><use href="#i-notepad"/></svg></div>
            <div class="tb-tray">
                <svg class="tray-up" viewBox="0 0 16 16"><path fill="none" stroke="#ddd" stroke-width="1.300" d="M3 11l5-6 5 6"/></svg>
                <svg class="tray-e"><use href="#i-tray-e"/></svg>
                <span class="tray-wifi"><svg class="s16"><use href="#i-wifi"/></svg></span>
                <svg class="s16"><use href="#i-sound"/></svg>
                <span class="tray-lang">ENG</span>
                <span class="tray-clock"><span>9:31 PM</span><span>11/30/2021</span></span>
                <span class="tray-notif"><svg class="s16"><use href="#i-notif"/></svg><b>3</b></span>
            </div>
        </div>
    </div>

    <div class="screen">
        <div class="explorer">
            <div class="ex-title">
                <svg class="s14h"><use href="#i-folder"/></svg>
                <span class="ex-bar"></span>
                <svg class="s14h"><use href="#i-props"/></svg>
                <svg class="s14h"><use href="#i-folder"/></svg>
                <span class="ex-drop"></span>
                <span class="ex-bar"></span>
                <span class="ex-title-name">spring-gumball</span>
                <span class="ex-spacer"></span>
                <span class="ex-win">–</span>
                <span class="ex-win"><span class="restore restore-dim"></span></span>
                <span class="ex-win"><svg class="s16"><use href="#i-x"/></svg></span>
            </div>

            <div class="ex-tabs">
                <span class="ex-tab ex-tab-file">File</span>
                <span class="ex-tab ex-tab-home">Home</span>
                <span class="ex-tab ex-tab-share">Share</span>
                <span class="ex-tab ex-tab-view">View</span>
                <span class="ex-spacer"></span>
                <svg class="ex-collapse" viewBox="0 0 16 16"><path fill="none" stroke="#ccc" stroke-width="2" d="M3 11l5-5 5 5"/></svg>
                <span class="ex-help">?</span>
            </div>

            <div class="ribbon">
                <section class="rgroup rg-clipboard">
                    <div class="rbody">
                        <div class="rbig rb-pin"><svg class="rico"><use href="#i-pin"/></svg><span>Pin to Quick access</span></div>
                        <div class="rbig rb-copy"><svg class="rico"><use href="#i-bigcopy"/></svg><span>Copy</span></div>
                        <div class="rbig rb-paste"><svg class="rico"><use href="#i-bigpaste"/></svg><span>Paste</span></div>
                        <div class="rsmalls">
                            <div class="rsmall rsmall-dim"><svg><use href="#i-cut"/></svg><span>Cut</span></div>
                            <div class="rsmall rsmall-dim"><svg><use href="#i-copypath"/></svg><span>Copy path</span></div>
                            <div class="rsmall rsmall-dim"><svg><use href="#i-pasteshort"/></svg><span>Paste shortcut</span></div>
                        </div>
                    </div>
                    <div class="rlabel">Clipboard</div>
                </section>
                <section class="rgroup rg-organize">
                    <div class="rbody">
                        <div class="rbig rb-mv rsmall-dim"><svg class="rico"><use href="#i-movefolder"/></svg><span>Move<br>to ▾</span></div>
                        <div class="rbig rb-mv rsmall-dim"><svg class="rico"><use href="#i-copyfolder"/></svg><span>Copy<br>to ▾</span></div>
                        <span class="rsep"></span>
                        <div class="rbig rb-mv"><svg class="rico"><use href="#i-bigx"/></svg><span>Delete<br>▾</span></div>
                        <div class="rbig rb-mv rsmall-dim"><svg class="rico"><use href="#i-rename"/></svg><span>Rename</span></div>
                    </div>
                    <div class="rlabel">Organize</div>
                </section>
                <section class="rgroup rg-new">
                    <div class="rbody">
                        <div class="rbig rb-new"><svg class="rico"><use href="#i-newfolder"/></svg><span>New<br>folder</span></div>
                        <div class="rsmalls">
                            <div class="rsmall"><svg><use href="#i-newitem"/></svg><span>New item ▾</span></div>
                            <div class="rsmall"><svg><use href="#i-easy"/></svg><span>Easy access ▾</span></div>
                        </div>
                    </div>
                    <div class="rlabel">New</div>
                </section>
                <section class="rgroup rg-open">
                    <div class="rbody">
                        <div class="rbig rb-props"><svg class="rico"><use href="#i-props"/></svg><span>Properties<br>▾</span></div>
                        <div class="rsmalls">
                            <div class="rsmall"><svg><use href="#i-open"/></svg><span class="dim">Open ▾</span></div>
                            <div class="rsmall"><svg><use href="#i-edit"/></svg><span class="dim">Edit</span></div>
                            <div class="rsmall"><svg><use href="#i-history"/></svg><span>History</span></div>
                        </div>
                    </div>
                    <div class="rlabel">Open</div>
                </section>
                <section class="rgroup rg-select">
                    <div class="rbody">
                        <div class="rsmalls">
                            <div class="rsmall"><svg><use href="#i-selall"/></svg><span>Select all</span></div>
                            <div class="rsmall"><svg><use href="#i-selnone"/></svg><span>Select none</span></div>
                            <div class="rsmall"><svg><use href="#i-selinv"/></svg><span>Invert selection</span></div>
                        </div>
                    </div>
                    <div class="rlabel">Select</div>
                </section>
            </div>

            <div class="ex-addr">
                <svg class="s16 addr-back"><use href="#i-back"/></svg>
                <svg class="s16 addr-fwd"><use href="#i-fwd"/></svg>
                <span class="addr-drop">˅</span>
                <svg class="s16 addr-up"><use href="#i-qa-arrow"/></svg>
                <div class="addr-box">
                    <svg class="s14h"><use href="#i-folder"/></svg>
                    <span class="crumb-sep">›</span><span>Nhu</span><span class="crumb-sep">›</span><span>fa21</span><span class="crumb-sep">›</span><span>spring-gumball</span><span class="crumb-sep">›</span>
                    <span class="ex-spacer"></span>
                    <span class="addr-hist">˅</span>
                    <span class="addr-refresh">↻</span>
                </div>
                <div class="addr-search">
                    <svg class="s14"><use href="#i-mag"/></svg>
                    <span>Search spring-gumball</span>
                </div>
            </div>

            <div class="ex-main">
                <aside class="ex-nav">
                    <div class="nav-group">
                        <div class="nav-row nav-root nav-sel"><svg><use href="#i-star"/></svg>Quick access</div>
                        <div class="nav-row"><svg><use href="#i-desktop"/></svg>Desktop<svg class="nav-pin"><use href="#i-pin"/></svg></div>
                        <div class="nav-row"><svg><use href="#i-down"/></svg>Downloads<svg class="nav-pin"><use href="#i-pin"/></svg></div>
                        <div class="nav-row"><svg><use href="#i-docs"/></svg>Documents<svg class="nav-pin"><use href="#i-pin"/></svg></div>
                        <div class="nav-row"><svg><use href="#i-pics"/></svg>Pictures<svg class="nav-pin"><use href="#i-pin"/></svg></div>
                        <div class="nav-row"><svg><use href="#i-folder"/></svg>fa21-172-sprring</div>
                        <div class="nav-row"><svg><use href="#i-folder"/></svg>images</div>
                        <div class="nav-row"><svg><use href="#i-folder"/></svg>images</div>
                        <div class="nav-row"><svg><use href="#i-folder"/></svg>lab9</div>
                    </div>
                    <div class="nav-group"><div class="nav-row nav-root"><svg><use href="#i-cc"/></svg>Creative Cloud Files</div></div>
                    <div class="nav-group"><div class="nav-row nav-root"><svg><use href="#i-cloud"/></svg>OneDrive</div></div>
                    <div class="nav-group"><div class="nav-row nav-root"><svg><use href="#i-onepers"/></svg>OneDrive - Personal</div></div>
                    <div class="nav-group">
                        <div class="nav-row nav-root"><svg><use href="#i-pc"/></svg>This PC</div>
                        <div class="nav-row"><svg><use href="#i-cube"/></svg>3D Objects</div>
                        <div class="nav-row"><svg><use href="#i-desktop"/></svg>Desktop</div>
                        <div class="nav-row"><svg><use href="#i-docs"/></svg>Documents</div>
                        <div class="nav-row"><svg><use href="#i-down"/></svg>Downloads</div>
                        <div class="nav-row"><svg><use href="#i-music"/></svg>Music</div>
                        <div class="nav-row"><svg><use href="#i-pics"/></svg>Pictures</div>
                        <div class="nav-row"><svg><use href="#i-video"/></svg>Videos</div>
                        <div class="nav-row"><svg><use href="#i-sysdisk"/></svg>Local Disk (C:)</div>
                        <div class="nav-row"><svg><use href="#i-disk"/></svg>Elements (E:)</div>
                    </div>
                    <div class="nav-group"><div class="nav-row nav-root"><svg><use href="#i-disk"/></svg>Elements (E:)</div></div>
                    <div class="nav-group"><div class="nav-row nav-root"><svg><use href="#i-net"/></svg>Network</div></div>
                </aside>

                <section class="ex-list">
                    <div class="list-head">
                        <span class="lh-name">Name<span class="sort-caret">^</span></span>
                        <span>Date modified</span>
                        <span>Type</span>
                        <span>Size</span>
                    </div>
                    <div class="list-rows">
                        <div class="frow"><span class="fname"><svg><use href="#i-folder"/></svg>.github</span><span>11/30/2021 8:38 PM</span><span>File folder</span><span class="fsize"></span></div>
                        <div class="frow"><span class="fname"><svg><use href="#i-folder"/></svg>.gradle</span><span>11/30/2021 8:18 PM</span><span>File folder</span><span class="fsize"></span></div>
                        <div class="frow"><span class="fname"><svg><use href="#i-folder"/></svg>bin</span><span>11/30/2021 8:18 PM</span><span>File folder</span><span class="fsize"></span></div>
                        <div class="frow"><span class="fname"><svg><use href="#i-folder"/></svg>gradle</span><span>11/30/2021 8:18 PM</span><span>File folder</span><span class="fsize"></span></div>
                        <div class="frow"><span class="fname"><svg><use href="#i-folder"/></svg>images</span><span>11/30/2021 9:24 PM</span><span>File folder</span><span class="fsize"></span></div>
                        <div class="frow"><span class="fname"><svg><use href="#i-folder"/></svg>src</span><span>11/30/2021 8:18 PM</span><span>File folder</span><span class="fsize"></span></div>
                        <div class="frow"><span class="fname"><svg><use href="#i-text"/></svg>.gitignore</span><span>10/4/2021 9:00 PM</span><span>Text Document</span><span class="fsize">1 KB</span></div>
                        <div class="frow"><span class="fname"><svg><use href="#i-file"/></svg>build.gradle</span><span>10/4/2021 9:00 PM</span><span>GRADLE File</span><span class="fsize">2 KB</span></div>
                        <div class="frow"><span class="fname"><svg><use href="#i-yaml"/></svg>deployment</span><span>11/30/2021 8:38 PM</span><span>YAML File</span><span class="fsize">1 KB</span></div>
                        <div class="frow"><span class="fname"><svg><use href="#i-shell"/></svg>docker</span><span>10/4/2021 9:00 PM</span><span>Shell Script</span><span class="fsize">8 KB</span></div>
                        <div class="frow"><span class="fname"><svg><use href="#i-yaml"/></svg>docker-compose</span><span>10/4/2021 9:00 PM</span><span>YAML File</span><span class="fsize">1 KB</span></div>
                        <div class="frow"><span class="fname"><svg><use href="#i-file"/></svg>Dockerfile</span><span>10/4/2021 9:00 PM</span><span>File</span><span class="fsize">1 KB</span></div>
                        <div class="frow"><span class="fname"><svg><use href="#i-file"/></svg>gradlew</span><span>10/4/2021 9:00 PM</span><span>File</span><span class="fsize">6 KB</span></div>
                        <div class="frow"><span class="fname"><svg><use href="#i-shell"/></svg>gradlew</span><span>10/4/2021 9:00 PM</span><span>Windows Batch File</span><span class="fsize">3 KB</span></div>
                        <div class="frow"><span class="fname"><svg><use href="#i-yaml"/></svg>ingress</span><span>10/4/2021 9:00 PM</span><span>YAML File</span><span class="fsize">1 KB</span></div>
                        <div class="frow"><span class="fname"><svg><use href="#i-png"/></svg>initializr</span><span>10/4/2021 9:00 PM</span><span>PNG File</span><span class="fsize">857 KB</span></div>
                        <div class="frow"><span class="fname"><svg><use href="#i-yaml"/></svg>kustomization</span><span>10/4/2021 9:00 PM</span><span>YML File</span><span class="fsize">1 KB</span></div>
                        <div class="frow"><span class="fname"><svg><use href="#i-file"/></svg>Makefile</span><span>10/4/2021 9:00 PM</span><span>File</span><span class="fsize">3 KB</span></div>
                        <div class="frow"><span class="fname"><svg><use href="#i-yaml"/></svg>pod</span><span>10/4/2021 9:00 PM</span><span>YAML File</span><span class="fsize">1 KB</span></div>
                        <div class="frow"><span class="fname"><svg><use href="#i-yaml"/></svg>README</span><span>11/30/2021 9:24 PM</span><span>MD File</span><span class="fsize">1 KB</span></div>
                        <div class="frow"><span class="fname"><svg><use href="#i-yaml"/></svg>service</span><span>10/4/2021 9:00 PM</span><span>YAML File</span><span class="fsize">1 KB</span></div>
                        <div class="frow"><span class="fname"><svg><use href="#i-file"/></svg>settings.gradle</span><span>10/4/2021 9:00 PM</span><span>GRADLE File</span><span class="fsize">1 KB</span></div>
                    </div>
                </section>
            </div>

            <div class="ex-status">
                <span>22 items</span>
                <span class="ex-spacer"></span>
                <span class="view-btn view-on"><svg class="view-ic"><use href="#i-viewdetail"/></svg></span>
                <span class="view-btn"><svg class="s16"><use href="#i-pics"/></svg></span>
            </div>
        </div>

        <div class="taskbar taskbar-2">
            <div class="tb-start"><svg class="s16"><use href="#i-win"/></svg></div>
            <div class="tb-start"><svg class="s16"><use href="#i-mag"/></svg></div>
            <div class="tb-cortana"><span class="ring"></span></div>
            <div class="tb-view"><svg class="s16"><use href="#i-taskview"/></svg></div>
            <div class="tb-app tb-active tb-open"><svg><use href="#i-chrome"/></svg></div>
            <div class="tb-app tb-open"><svg><use href="#i-tbfolder"/></svg></div>
            <div class="tb-app"><svg><use href="#i-keepass"/></svg></div>
            <div class="tb-app"><svg><use href="#i-mahjong"/></svg></div>
            <div class="tb-app"><svg><use href="#i-vs"/></svg></div>
            <div class="tb-app tb-open"><svg><use href="#i-discord"/></svg><span class="tb-badge">9+</span></div>
            <div class="tb-app tb-open"><svg><use href="#i-git"/></svg></div>
            <div class="tb-app tb-open"><svg><use href="#i-atom"/></svg></div>
            <div class="tb-app tb-open"><svg><use href="#i-vscode"/></svg></div>
            <div class="tb-app tb-open"><svg><use href="#i-paint"/></svg></div>
            <div class="tb-app tb-open"><svg><use href="#i-notepad"/></svg></div>
            <div class="tb-tray">
                <span class="tray-clock"><span>9:31 PM</span><span>11/30/2021</span></span>
            </div>
        </div>
        <div class="blackbar"></div>
    </div>
</div>
</body>
</html>
```

FILE: styles.css
```css
* { box-sizing: border-box; }

html, body {
    margin: 0;
    padding: 0;
    background: #000;
    overflow: hidden;
}

body {
    width: 3840px;
    height: 1141px;
    font-family: Roboto, "Liberation Sans", sans-serif;
    font-size: 12px;
    color: #e8eaed;
}

svg { display: block; flex: none; }

.sprite { position: absolute; width: 0; height: 0; }

.s14 { width: 14px; height: 14px; }
.s14h { width: 14px; height: 16px; }
.s16 { width: 16px; height: 16px; }
.s18 { width: 18px; height: 18px; }
.s20 { width: 20px; height: 20px; }
.white { color: #fff; }
.dark { color: #000; }

.desktop { display: flex; width: 3840px; height: 1141px; }

.screen {
    width: 1920px;
    height: 1141px;
    display: flex;
    flex-direction: column;
}

.blackbar { height: 61px; flex: none; background: #000; }

/* ---------- chrome ---------- */

.chrome { flex: 1; display: flex; flex-direction: column; min-height: 0; }

.tabstrip {
    height: 33px;
    flex: none;
    display: flex;
    padding-left: 8px;
    background: #0d0d0d;
    border-bottom: 1px solid #2c2c2c;
}

.tab {
    width: 239px;
    display: flex;
    align-items: center;
    padding: 0 7px 0 11px;
    background: linear-gradient(#262626, #101010);
    border-right: 1px solid #3a3a3a;
    border-radius: 6px 6px 0 0;
}

.tab-favicon { width: 16px; height: 16px; margin-right: 9px; }

.tab-title {
    flex: 1;
    overflow: hidden;
    white-space: nowrap;
    font-size: 12px;
    color: #e8e8e8;
    -webkit-mask-image: linear-gradient(to right, #000 92%, transparent);
    mask-image: linear-gradient(to right, #000 92%, transparent);
}

.tab-close { width: 14px; height: 14px; color: #eee; margin-left: 3px; }

.tab-active {
    background: linear-gradient(#6b6b6b, #3c3c3c);
    border-right: none;
    margin-top: 1px;
}

.tab-new {
    width: 28px;
    height: 28px;
    margin: 3px 0 0 8px;
    border-radius: 50%;
    background: #1d1d1d;
    color: #fff;
    font-size: 22px;
    line-height: 26px;
    text-align: center;
}

.tab-spacer { flex: 1; }

.profile-dot {
    width: 28px;
    height: 28px;
    margin: 4px 19px 0 0;
    border-radius: 50%;
    background: #2a2a2a;
    display: flex;
    align-items: center;
    justify-content: center;
}

.profile-arrow {
    width: 12px;
    height: 12px;
    border-radius: 50%;
    background: #fff;
}

.winbtns { display: flex; }

.winbtn {
    width: 46px;
    display: flex;
    align-items: center;
    justify-content: center;
    background: #000;
    color: #eee;
    font-size: 14px;
    border-left: 1px solid #111;
}

.restore {
    display: block;
    width: 10px;
    height: 13px;
    border: 1.5px solid #eee;
}

.restore-dim { border-color: #999; }

.urlbar {
    height: 36px;
    flex: none;
    display: flex;
    align-items: center;
    padding: 0 0 2px 13px;
    background: #1e1e1e;
    border-bottom: 1px solid #181818;
}

.nav-icon { width: 16px; height: 16px; color: #f0f0f0; margin-right: 16px; }
.nav-off { color: #777; }

.omnibox {
    width: 1479px;
    height: 28px;
    margin-left: -1px;
    display: flex;
    align-items: center;
    padding: 0 10px 0 14px;
    border-radius: 14px;
    background: #232427;
    font-size: 14px;
    white-space: nowrap;
}

.lock { width: 12px; height: 14px; color: #aaa; margin-right: 8px; }
.url-host { color: #e8eaed; }
.url-rest { color: #8f9296; flex: 1; }
.bstar { width: 18px; height: 18px; color: #bbb; }

.exts { display: flex; margin-left: 7px; }

.ext {
    width: 32px;
    height: 24px;
    display: flex;
    align-items: center;
    justify-content: center;
    position: relative;
    font-size: 11px;
    font-weight: 700;
    color: #fff;
}

.ext-red::before, .ext-abp::before, .ext-green::before, .ext-se::before, .ext-o::before {
    content: "";
    position: absolute;
    left: 8px;
    top: 4px;
    width: 16px;
    height: 16px;
    border-radius: 50%;
    z-index: -1;
}

.ext-red::before { background: #e41e25; }
.ext-green::before { background: #15c39a; }
.ext-abp::before { background: #e8304a; }
.ext-se::before { background: #555; border-radius: 0; }
.ext-o::before { background: transparent; border: 3px solid #0d3d91; }
.ext-red, .ext-o, .ext-green, .ext-abp, .ext-se { isolation: isolate; font-size: 8px; }
.ext-green { font-size: 11px; }
.ext-se { color: #222; font-size: 10px; }

.ext-num {
    position: absolute;
    right: 1px;
    bottom: -4px;
    width: 12px;
    height: 13px;
    background: #666;
    border-radius: 2px;
    font-size: 10px;
    line-height: 13px;
    text-align: center;
    color: #fff;
}

.ext-num-green { background: #7fc8a9; }

.ext-box { width: 14px; height: 22px; border: 3px solid #fff; background: #111; }

.ext-avatar::before {
    content: "";
    position: absolute;
    left: 5px;
    top: 1px;
    width: 22px;
    height: 22px;
    border-radius: 50%;
    background: #0b82c8;
    z-index: -1;
}

.ext-avatar { isolation: isolate; font-weight: 400; }

.bookmarks {
    height: 33px;
    flex: none;
    display: grid;
    grid-template-columns: 68px 148px 108px 152px 148px 149px 153px 109px 148px 150px 154px 150px 224px 1fr;
    align-items: center;
    padding-left: 13px;
    background: linear-gradient(#222, #2b2b2b);
    border-bottom: 1px solid #3a3a3a;
    white-space: nowrap;
}

.bm { display: flex; align-items: center; gap: 8px; }
.bm span { color: #e3e3e3; font-size: 12px; }
.bm-more { color: #eee; font-size: 16px; }

.gcp-head {
    height: 49px;
    flex: none;
    display: flex;
    align-items: center;
    background: #1a73e8;
    color: #fff;
    position: relative;
    z-index: 2;
    box-shadow: 0 2px 4px rgba(0, 0, 0, .3);
}

.burger { width: 18px; margin: 0 22px 0 23px; display: flex; flex-direction: column; gap: 3px; }
.burger i { display: block; height: 2px; background: #fff; }

.gcp-brand { width: 216px; font-size: 19px; white-space: nowrap; }

.gcp-project { display: flex; align-items: center; gap: 6px; width: 425px; font-size: 14px; }

.caret {
    width: 0;
    height: 0;
    border: 5px solid transparent;
    border-top: 6px solid #fff;
    border-bottom: 0;
    margin-left: 4px;
}

.gcp-search {
    width: 696px;
    height: 36px;
    display: flex;
    align-items: center;
    padding: 0 16px 0 17px;
    border-radius: 4px;
    background: #3b84ea;
    font-size: 15px;
}

.gcp-search-text { margin-left: 19px; flex: 1; }
.search-x { margin-right: 16px; }
.search-chev { width: 16px; height: 16px; }

.gcp-right { margin-left: auto; display: flex; padding-right: 16px; }

.gcp-btn { width: 40px; display: flex; justify-content: center; align-items: center; }

.notif-7 {
    width: 26px;
    height: 26px;
    border-radius: 50%;
    background: #fff;
    border: 3px solid #12b58c;
    color: #1a73e8;
    font-size: 14px;
    font-weight: 700;
    line-height: 20px;
    text-align: center;
}

.avatar { width: 28px; height: 28px; }

.iam-toolbar {
    height: 49px;
    flex: none;
    display: flex;
    align-items: center;
    background: #fff;
    color: #5f6368;
    border-bottom: 1px solid #dadce0;
}

.iam-logo {
    width: 64px;
    height: 48px;
    display: flex;
    align-items: center;
    justify-content: center;
    border-right: 1px solid #e3e3e3;
    color: #757575;
}

.shield-big { width: 24px; height: 29px; }

.iam-title {
    margin: 0 0 0 24px;
    width: 200px;
    font-size: 20px;
    font-weight: 400;
    color: #202124;
    white-space: nowrap;
}

.action {
    display: flex;
    align-items: center;
    gap: 3px;
    margin-right: 32px;
    font-size: 13px;
    font-weight: 500;
    color: #80868b;
    white-space: nowrap;
}

.action-blue { color: #3367d6; }
.plus { font-size: 22px; line-height: 1; font-weight: 400; margin-right: 2px; }

.iam-body {
    flex: 1;
    min-height: 0;
    display: flex;
    background: #fff;
    color: #5f6368;
    font-size: 13px;
}

.sidenav {
    width: 64px;
    flex: none;
    display: flex;
    flex-direction: column;
    border-right: 1px solid #e3e3e3;
    color: #757575;
}

.sidenav-scroll {
    flex: 1;
    min-height: 0;
    overflow: hidden;
    padding-top: 9px;
}

.side-item {
    height: 40px;
    display: flex;
    align-items: center;
    justify-content: center;
}

.side-item svg { width: 20px; height: 20px; }

.side-active { background: #e8f0fe; color: #3367d6; }

.side-foot {
    height: 49px;
    flex: none;
    display: flex;
    align-items: center;
    justify-content: center;
    border-top: 1px solid #e3e3e3;
}

.side-foot svg { width: 18px; height: 18px; }
.side-dark { color: #222; }

.iam-main { flex: 1; min-width: 0; padding: 22px 24px 0; }

.proj-title {
    margin: 0;
    font-size: 18px;
    line-height: 28px;
    font-weight: 400;
    color: #202124;
}

.proj-desc { margin: 4px 0 0; line-height: 20px; font-size: 12px; white-space: nowrap; }
.proj-desc-2 { margin-top: 12px; }
.proj-desc a { color: #3367d6; border-bottom: 1px solid #1a73e8; }

.filterbar {
    margin-top: 26px;
    height: 41px;
    display: flex;
    align-items: center;
    padding-left: 18px;
    border-top: 2px solid #e3e3e3;
    position: relative;
}

.filter-label { margin-left: 3px; color: #202124; font-weight: 500; font-size: 13px; }
.filter-hint { margin-left: 14px; color: #80868b; font-size: 13px; flex: 1; }

.filter-help {
    width: 28px;
    display: flex;
    justify-content: center;
    margin-right: 14px;
}

.filter-cols {
    width: 42px;
    height: 28px;
    display: flex;
    align-items: center;
    justify-content: center;
    border-left: 1px solid #e3e3e3;
    margin-right: 6px;
}

.sa-table {
    width: 1808px;
    border-collapse: collapse;
    table-layout: fixed;
}

.c-check { width: 64px; }
.c-email { width: 431px; }
.c-status { width: 94px; }
.c-name { width: 266px; }
.c-desc { width: 122px; }
.c-key { width: 312px; }
.c-date { width: 125px; }
.c-oauth { width: 198px; }

.sa-table th, .sa-table td {
    height: 29px;
    padding: 0;
    white-space: nowrap;
    border-bottom: 2px solid #e3e3e3;
    font-size: 13px;
    text-align: left;
    overflow: hidden;
}

.sa-table th {
    background: #f3f3f3;
    border-top: 2px solid #e3e3e3;
    font-weight: 500;
    color: #757575;
}

.sa-table th.th-dark { color: #202124; }
.sa-table th:first-child, .sa-table td:first-child { padding-left: 20px; }

.cbox {
    display: block;
    width: 15px;
    height: 15px;
    border: 2px solid #000;
    border-radius: 2px;
    background: #fff;
}

.sort-arrow { display: inline-block; vertical-align: middle; color: #000; margin-left: 4px; }
.th-help { display: inline-block; vertical-align: middle; margin-left: 3px; }
.key-ic { display: inline-block; vertical-align: middle; color: #5f6368; margin-right: 5px; margin-left: 2px; }
.status-ic { margin-left: 4px; }
.td-email { color: #3c4043; }
.td-oauth { color: #6a5a8c; }
.copy-ic { display: inline-block; vertical-align: middle; color: #000; margin-left: 9px; }
.sa-table .td-actions { border-left: 2px solid #e3e3e3; padding-left: 15px; }
.kebab { color: #000; margin-left: 2px; }

/* ---------- download shelf ---------- */

.shelf {
    height: 57px;
    flex: none;
    display: flex;
    align-items: center;
    background: #000;
    font-size: 12px;
    border-top: 1px solid #000;
}

.shelf-file { width: 18px; height: 22px; margin-left: 20px; }
.shelf-name { margin-left: 11px; width: 156px; white-space: nowrap; }
.shelf-caret { width: 14px; height: 14px; }
.shelf-sep { width: 1px; height: 45px; margin-left: 17px; background: #444; }
.shelf-space { flex: 1; }

.shelf-all {
    width: 76px;
    height: 32px;
    margin-bottom: 3px;
    line-height: 30px;
    text-align: center;
    border: 1px solid #444;
    border-radius: 4px;
    background: #101010;
    color: #dfe6ec;
    font-weight: 700;
}

.shelf-x { margin: 0 10px 0 11px; color: #aaa; }

/* ---------- taskbar ---------- */

.taskbar {
    height: 40px;
    flex: none;
    display: flex;
    background: #272727;
    color: #fff;
}

.taskbar-2 { background: #2a2a2a; }

.tb-start, .tb-cortana, .tb-view {
    width: 48px;
    display: flex;
    align-items: center;
    justify-content: center;
}

.tb-searchbox {
    width: 344px;
    display: flex;
    align-items: center;
    gap: 12px;
    padding-left: 12px;
    background: #363636;
    border: 1px solid #6b6b6b;
    font-size: 14px;
    color: #ddd;
    white-space: nowrap;
}

.ring {
    width: 15px;
    height: 15px;
    border-radius: 50%;
    border: 2px solid #fff;
}

.tb-view { margin-right: 2px; }

.tb-app {
    width: 49px;
    display: flex;
    align-items: center;
    justify-content: center;
    position: relative;
    border-bottom: 2px solid transparent;
}

.tb-app svg { width: 24px; height: 24px; }
.tb-open { border-bottom-color: #8ea4c0; background-clip: padding-box; }
.tb-active { background-color: #4a4a4a; }

.tb-badge {
    position: absolute;
    right: 7px;
    bottom: 3px;
    font-size: 8px;
    font-weight: 700;
    color: #fff;
}

.tb-tray {
    margin-left: auto;
    display: flex;
    align-items: center;
    gap: 5px;
    padding-right: 17px;
    font-size: 12px;
    color: #e5e5e5;
}

.taskbar-2 .tb-tray { padding-right: 0; }

.tray-up { width: 14px; height: 14px; margin-right: 4px; }
.tray-e { width: 14px; height: 18px; }

.tray-wifi {
    width: 22px;
    height: 38px;
    display: flex;
    align-items: center;
    justify-content: center;
    background: #3a3a3a;
}

.tray-lang { margin: 0 4px; font-size: 12px; }

.tray-clock {
    width: 66px;
    display: flex;
    flex-direction: column;
    align-items: center;
    gap: 3px;
    line-height: 15px;
}

.tray-notif { width: 30px; height: 24px; position: relative; padding-left: 6px; }

.tray-notif b {
    position: absolute;
    left: 15px;
    top: 9px;
    width: 15px;
    height: 15px;
    border: 1px solid #aaa;
    border-radius: 50%;
    background: #222;
    font-size: 10px;
    line-height: 13px;
    text-align: center;
}

/* ---------- explorer ---------- */

.explorer {
    flex: 1;
    min-height: 0;
    display: flex;
    flex-direction: column;
    background: #202020;
    font-size: 12px;
    color: #e6e6e6;
}

.ex-title {
    height: 23px;
    flex: none;
    display: flex;
    align-items: center;
    gap: 8px;
    padding-left: 2px;
    background: #2d2d2d;
}

.ex-bar { width: 1px; height: 16px; background: #666; }
.ex-drop { width: 7px; height: 5px; border-top: 4px solid #eee; border-bottom: 1px solid #eee; }
.ex-title-name { color: #8c8c8c; }
.ex-spacer { flex: 1; }

.ex-win {
    width: 46px;
    display: flex;
    justify-content: center;
    color: #999;
    font-size: 13px;
}

.ex-tabs {
    height: 23px;
    flex: none;
    display: flex;
    align-items: center;
    background: #000;
    padding-right: 3px;
}

.ex-tab { width: 30px; text-align: center; color: #eee; }
.ex-tab-file { width: 56px; height: 23px; line-height: 23px; background: #4a5b6c; color: #fff; }
.ex-tab-home { width: 58px; height: 23px; line-height: 23px; background: #202020; }
.ex-tab-view { margin-left: 28px; }

.ex-collapse { width: 12px; height: 12px; margin-right: 8px; }

.ex-help {
    width: 16px;
    height: 18px;
    border-radius: 50%;
    background: #0a66c8;
    border: 1px solid #cfe4f8;
    color: #fff;
    font-size: 11px;
    font-weight: 700;
    line-height: 16px;
    text-align: center;
}

.ribbon {
    height: 92px;
    flex: none;
    display: flex;
    background: #222;
    border-bottom: 2px solid #2b2b2b;
}

.rgroup {
    display: flex;
    flex-direction: column;
    border-right: 1px solid #333;
}

.rg-clipboard { width: 262px; }
.rg-organize { width: 191px; }
.rg-new { width: 145px; }
.rg-open { width: 133px; }
.rg-select { width: 115px; }

.rbody { height: 75px; flex: none; display: flex; }

.rlabel {
    flex: 1;
    text-align: center;
    color: #b9b9b9;
    line-height: 16px;
    border-top: 1px solid #2b2b2b;
}

.rbig {
    display: flex;
    flex-direction: column;
    align-items: center;
    padding-top: 8px;
    line-height: 14px;
    text-align: center;
    color: #e0e0e0;
}

.rbig span { margin-top: 3px; font-size: 12px; }
.rico { width: 26px; height: 32px; color: #9a9a9a; }
.rb-pin { width: 68px; margin-left: 6px; }
.rb-copy { width: 38px; }
.rb-paste { width: 48px; }
.rb-mv { width: 42px; flex: none; }
.rg-organize .rbody { padding-left: 4px; }
.rb-new { width: 50px; }
.rb-props { width: 66px; }
.rsep { width: 1px; height: 52px; margin: 9px 5px 0; background: #3a3a3a; }
.rsmalls { padding-top: 5px; white-space: nowrap; }
.rg-select .rsmalls { padding-left: 8px; }

.rsmall {
    height: 22px;
    display: flex;
    align-items: center;
    gap: 4px;
    color: #e0e0e0;
}

.rsmall svg { width: 16px; height: 18px; }
.rsmall-dim, .dim { color: #9a9a9a; }
.rb-mv.rsmall-dim { color: #999; }

.ex-addr {
    height: 43px;
    flex: none;
    display: flex;
    align-items: center;
    background: #1c1c1c;
    padding: 0 13px 0 11px;
}

.addr-back { color: #fff; }
.addr-fwd { color: #777; margin-left: 13px; }
.addr-drop { width: 16px; margin-left: 8px; text-align: center; color: #ddd; font-size: 10px; }
.addr-up { color: #fff; margin-left: 5px; }

.addr-box {
    width: 1587px;
    height: 30px;
    margin-left: 5px;
    display: flex;
    align-items: center;
    gap: 9px;
    padding-left: 4px;
    border: 1px solid #5a5a5a;
    color: #ddd;
}

.crumb-sep { color: #888; }
.addr-hist { color: #aaa; font-size: 10px; }

.addr-refresh {
    width: 29px;
    text-align: center;
    color: #999;
    font-size: 15px;
    border-left: 1px solid #2a2a2a;
}

.addr-search {
    width: 200px;
    height: 30px;
    margin-left: auto;
    display: flex;
    align-items: center;
    gap: 9px;
    padding-left: 13px;
    border: 1px solid #5a5a5a;
    color: #777;
}

.ex-main { flex: 1; min-height: 0; display: flex; }

.ex-nav {
    width: 156px;
    flex: none;
    background: #191919;
    padding-top: 16px;
    margin-right: 2px;
    white-space: nowrap;
    overflow: hidden;
    font-size: 12px;
}

.nav-group + .nav-group { margin-top: 8px; }

.nav-row {
    height: 24px;
    display: flex;
    align-items: center;
    gap: 5px;
    padding-left: 32px;
    color: #e0e0e0;
    position: relative;
    border: 1px solid transparent;
    border-width: 1px 0;
    background-clip: padding-box;
}

.nav-row svg { width: 16px; height: 16px; }
.nav-root { padding-left: 25px; }
.nav-sel { background-color: #383838; margin-left: 1px; padding-left: 24px; }

.nav-row svg.nav-pin {
    position: absolute;
    left: 142px;
    top: 6px;
    width: 12px;
    height: 12px;
    color: #888;
}

.ex-list { flex: 1; min-width: 0; display: flex; flex-direction: column; }

.list-head, .frow {
    display: grid;
    grid-template-columns: 273px 144px 120px 80px;
}

.list-head {
    height: 25px;
    align-items: stretch;
    color: #bdbdbd;
}

.list-head span {
    padding-left: 7px;
    line-height: 25px;
    border-right: 1px solid #444;
    position: relative;
}

.list-head .lh-name { padding-left: 19px; }

.list-head .sort-caret {
    position: absolute;
    left: 133px;
    top: -7px;
    border: 0;
    color: #999;
    font-size: 10px;
    padding: 0;
}

.list-rows { padding-top: 7px; }

.frow { height: 21px; align-items: center; color: #c9c9c9; white-space: nowrap; }
.frow span { padding-left: 7px; }

.frow .fname {
    display: flex;
    align-items: center;
    gap: 5px;
    padding-left: 21px;
    color: #e8e8e8;
}

.fname svg { width: 14px; height: 16px; }
.frow .fsize { padding: 0 7px 0 0; text-align: right; }

.ex-status {
    height: 23px;
    flex: none;
    display: flex;
    align-items: center;
    padding: 0 7px 0 15px;
    background: #333;
    color: #ccc;
    gap: 2px;
}

.view-btn { width: 21px; height: 23px; display: flex; align-items: center; justify-content: center; }
.view-on { background: #6a6a6a; border: 1px solid #888; }
.view-ic { width: 16px; height: 22px; }
```
